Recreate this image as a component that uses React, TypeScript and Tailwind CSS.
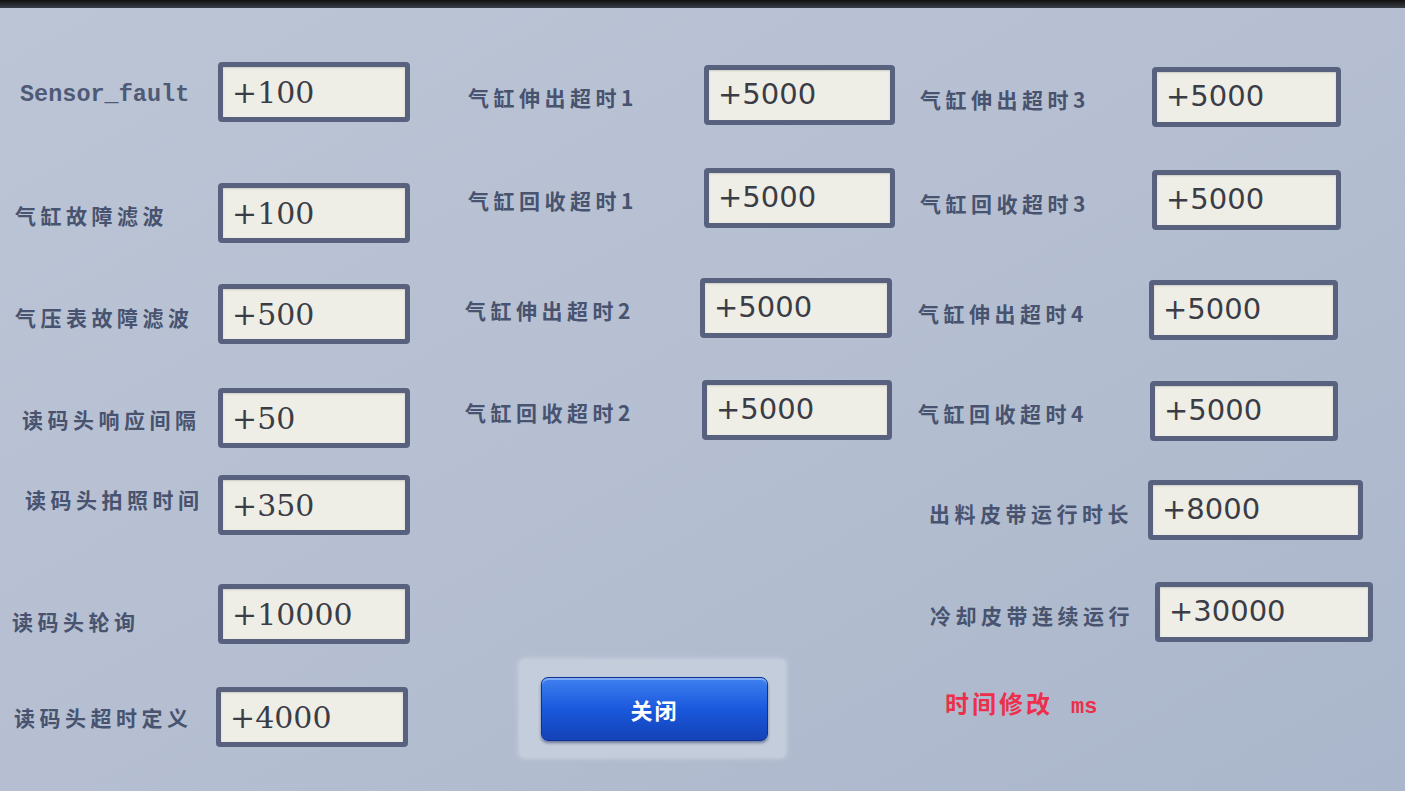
type Field = {
  label: string;
  value: string;
  row: string; // top spacing of the row
  labelCls: string; // width / offset of the label block
  boxCls: string; // width of the value box
  mono?: boolean;
};

const cjk = "font-['Noto_Sans_CJK_SC',sans-serif]";

const left: Field[] = [
  { label: "Sensor_fault", value: "+100", row: "mt-[54px]", labelCls: "w-[218px] pl-[20px] pt-[6px]", boxCls: "w-[192px]", mono: true },
  { label: "气缸故障滤波", value: "+100", row: "mt-[61px]", labelCls: "w-[218px] pl-[15px] pt-[6px]", boxCls: "w-[192px]" },
  { label: "气压表故障滤波", value: "+500", row: "mt-[41px]", labelCls: "w-[218px] pl-[15px] pt-[8px]", boxCls: "w-[192px]" },
  { label: "读码头响应间隔", value: "+50", row: "mt-[44px]", labelCls: "w-[218px] pl-[22px] pt-[4px]", boxCls: "w-[192px]" },
  { label: "读码头拍照时间", value: "+350", row: "mt-[27px]", labelCls: "w-[218px] pl-[25px] pb-[10px]", boxCls: "w-[192px]" },
  { label: "读码头轮询", value: "+10000", row: "mt-[49px]", labelCls: "w-[218px] pl-[12px] pt-[16px]", boxCls: "w-[192px]" },
  { label: "读码头超时定义", value: "+4000", row: "mt-[43px]", labelCls: "w-[216px] pl-[14px] pt-[2px]", boxCls: "w-[192px]" },
];

const middle: Field[] = [
  { label: "气缸伸出超时1", value: "+5000", row: "mt-[57px]", labelCls: "w-[284px] pl-[48px] pt-[6px]", boxCls: "w-[191px]" },
  { label: "气缸回收超时1", value: "+5000", row: "mt-[43px]", labelCls: "w-[284px] pl-[48px] pt-[6px]", boxCls: "w-[191px]" },
  { label: "气缸伸出超时2", value: "+5000", row: "mt-[50px]", labelCls: "w-[280px] pl-[45px] pt-[6px]", boxCls: "w-[192px]" },
  { label: "气缸回收超时2", value: "+5000", row: "mt-[42px]", labelCls: "w-[282px] pl-[45px] pt-[6px]", boxCls: "w-[190px]" },
];

const right: Field[] = [
  { label: "气缸伸出超时3", value: "+5000", row: "mt-[59px]", labelCls: "w-[252px] pl-[20px] pt-[6px]", boxCls: "w-[189px]" },
  { label: "气缸回收超时3", value: "+5000", row: "mt-[43px]", labelCls: "w-[252px] pl-[20px] pt-[8px]", boxCls: "w-[189px]" },
  { label: "气缸伸出超时4", value: "+5000", row: "mt-[50px]", labelCls: "w-[249px] pl-[18px] pt-[8px]", boxCls: "w-[189px]" },
  { label: "气缸回收超时4", value: "+5000", row: "mt-[41px]", labelCls: "w-[250px] pl-[18px] pt-[6px]", boxCls: "w-[188px]" },
  { label: "出料皮带运行时长", value: "+8000", row: "mt-[39px]", labelCls: "w-[248px] pl-[29px] pt-[8px]", boxCls: "w-[215px]" },
  { label: "冷却皮带连续运行", value: "+30000", row: "mt-[42px]", labelCls: "w-[255px] pl-[30px] pt-[8px]", boxCls: "w-[218px]" },
];

function ValueBox({ value, className, serif }: { value: string; className: string; serif?: boolean }) {
  return (
    <div
      className={`${className} h-[60px] shrink-0 rounded-[4px] border-[5px] border-[#58627e] bg-[#efeee6] pl-[9px] flex items-center text-[#3a3d46] shadow-[inset_0_1px_2px_rgba(0,0,0,0.15)] ${
        serif
          ? "font-['DejaVu_Serif',serif] text-[30px]"
          : "font-['DejaVu_Sans',sans-serif] text-[29px]"
      }`}
    >
      {value}
    </div>
  );
}

function Row({ f, serif }: { f: Field; serif?: boolean }) {
  return (
    <div className={`${f.row} flex items-center`}>
      <div className={`${f.labelCls} shrink-0 whitespace-nowrap`}>
        {f.mono ? (
          <span className="font-['Liberation_Mono',monospace] font-bold text-[23.5px] text-[#4f5a76]">{f.label}</span>
        ) : (
          <span className={`${cjk} font-bold text-[21px] tracking-[4.5px] text-[#48536f]`}>{f.label}</span>
        )}
      </div>
      <ValueBox value={f.value} className={f.boxCls} serif={serif} />
    </div>
  );
}

export default function App() {
  return (
    <div className="w-[1405px] h-[791px] overflow-hidden flex flex-col bg-gradient-to-br from-[#bcc5d6] via-[#b5bfd1] to-[#aab6cb]">
      <div className="h-[8px] shrink-0 bg-gradient-to-b from-[#111] to-[#3a3f48]" />
      <div className="flex flex-1">
        <div className="w-[420px] shrink-0 flex flex-col">
          {left.map((f) => (
            <Row key={f.label} f={f} serif />
          ))}
        </div>

        <div className="w-[480px] shrink-0 flex flex-col">
          {middle.map((f) => (
            <Row key={f.label} f={f} />
          ))}
          <div className="mt-[220px] ml-[100px] w-[265px] h-[97px] bg-[#c4cddc] rounded-[3px] shadow-[0_0_6px_rgba(255,255,255,0.5)] pt-[17px] pl-[21px]">
            <button className="w-[227px] h-[64px] rounded-[7px] border border-[#0c3394] bg-gradient-to-b from-[#3f80f0] via-[#1a58dc] to-[#1442b8] shadow-[0_2px_3px_rgba(20,40,90,0.5),inset_0_2px_0_rgba(255,255,255,0.35)] flex items-center justify-center">
              <span className={`${cjk} font-bold text-[22px] text-white tracking-[2px]`}>关闭</span>
            </button>
          </div>
        </div>

        <div className="flex-1 flex flex-col">
          {right.map((f) => (
            <Row key={f.label} f={f} />
          ))}
          <div className="mt-[43px] pl-[45px] flex items-baseline gap-[18px]">
            <span className={`${cjk} font-bold text-[24px] tracking-[3px] text-[#ec2f4a]`}>时间修改</span>
            <span className="font-['Liberation_Mono',monospace] font-bold text-[22px] text-[#ec2f4a]">ms</span>
          </div>
        </div>
      </div>
    </div>
  );
}
